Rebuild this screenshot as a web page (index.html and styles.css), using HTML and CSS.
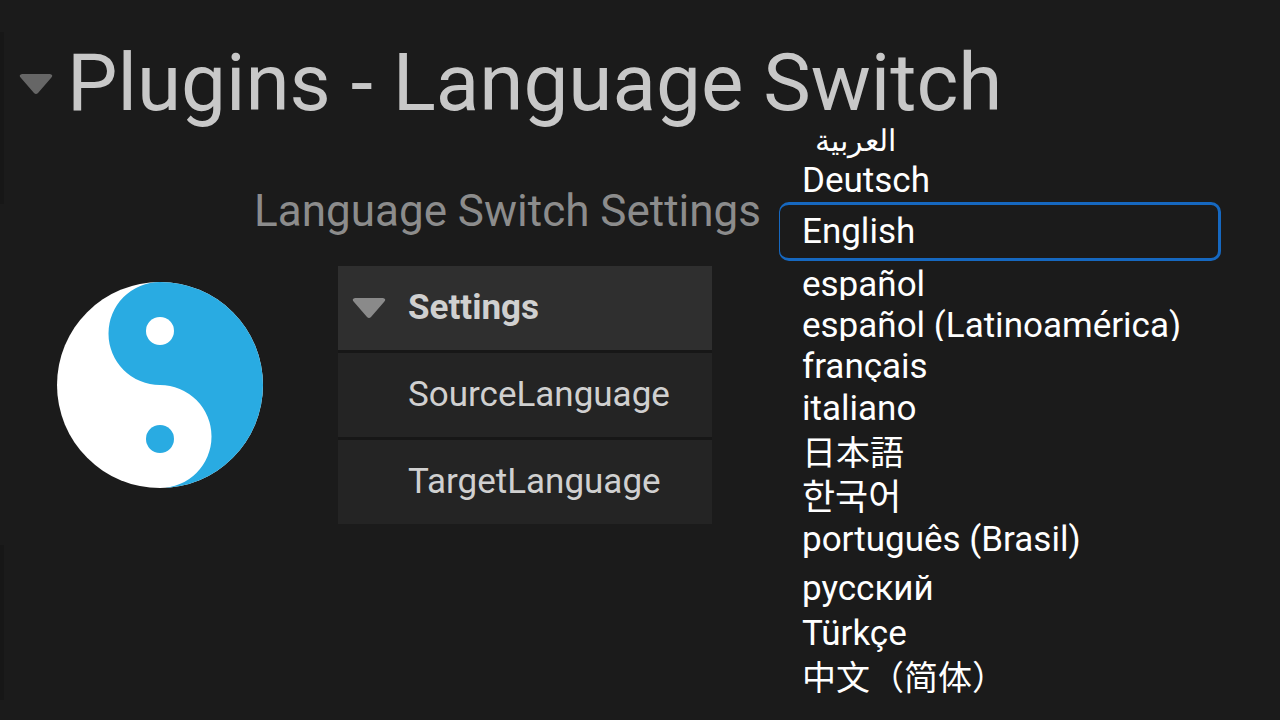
FILE: index.html
```html
<!DOCTYPE html>
<html lang="en">

<head>
  <meta charset="UTF-8">
  <meta name="viewport" content="width=device-width, initial-scale=1">
  <title>Plugins - Language Switch</title>
  <link rel="stylesheet" href="styles.css">
</head>

<body>

  <header class="page-header">
    <button class="toggle" type="button" aria-label="Collapse">
      <svg class="arrow" width="34" height="22" viewBox="0 0 34 22">
        <path d="M3 1h28q4 1 1 4L19 20q-2 2-4 0L2 5q-3-3 1-4z" />
      </svg>
    </button>
    <h1>Plugins - Language Switch</h1>
  </header>

  <main class="content">

    <section class="plugin">
      <h2>Language Switch Settings</h2>

      <div class="plugin-body">
        <svg class="logo" width="206" height="206" viewBox="0 0 206 206" role="img" aria-label="Language Switch">
          <circle cx="103" cy="103" r="103" fill="#fff" />
          <path fill="#29abe2" d="M103 0A103 103 0 0 1 103 206A51.500 51.500 0 0 0 103 103A51.500 51.500 0 0 1 103 0z" />
          <circle cx="103" cy="49" r="14" fill="#fff" />
          <circle cx="103" cy="157" r="14" fill="#29abe2" />
        </svg>

        <div class="settings">
          <button class="settings-head" type="button">
            <svg class="arrow" width="34" height="22" viewBox="0 0 34 22">
              <path d="M3 1h28q4 1 1 4L19 20q-2 2-4 0L2 5q-3-3 1-4z" />
            </svg>
            Settings
          </button>
          <div class="settings-row">SourceLanguage</div>
          <div class="settings-row">TargetLanguage</div>
        </div>
      </div>
    </section>

    <ul class="languages">
      <li><button type="button" class="arabic" lang="ar">العربية</button></li>
      <li><button type="button" class="short" lang="de">Deutsch</button></li>
      <li><button type="button" class="selected" lang="en">English</button></li>
      <li><button type="button" class="cut" lang="es">español</button></li>
      <li><button type="button" class="cut" lang="es-419">español (Latinoamérica)</button></li>
      <li><button type="button" class="cut" lang="fr">français</button></li>
      <li class="spaced"><button type="button" lang="it">italiano</button></li>
      <li><button type="button" lang="ja">日本語</button></li>
      <li><button type="button" lang="ko">한국어</button></li>
      <li><button type="button" class="raised" lang="pt-BR">português (Brasil)</button></li>
      <li><button type="button" lang="ru">русский</button></li>
      <li><button type="button" lang="tr">Türkçe</button></li>
      <li><button type="button" lang="zh-Hant">中文（简体）</button></li>
    </ul>

  </main>

</body>

</html>
```

FILE: styles.css
```css
* {
  box-sizing: border-box;
}

body {
  margin: 0;
  min-height: 100vh;
  color: #d0d0d0;
  /* faint shadow strips on the left edge */
  background:
    linear-gradient(#171717, #171717) 0 32px / 4px 172px no-repeat,
    linear-gradient(#171717, #171717) 0 545px / 4px 155px no-repeat,
    #1b1b1b;
  font-family: Roboto, "Noto Sans CJK TC", sans-serif;
  font-size: 35px;
}

button {
  margin: 0;
  padding: 0;
  border: 0;
  background: none;
  color: inherit;
  font: inherit;
  text-align: left;
  cursor: pointer;
}

h1,
h2 {
  margin: 0;
  font-weight: 400;
}

.page-header {
  display: flex;
  align-items: center;
  gap: 14px;
  height: 118px;
  padding: 48px 0 0 19px;
}

.page-header h1 {
  color: #c8c8c8;
  font-size: 80px;
  line-height: 70px;
  white-space: nowrap;
}

.toggle {
  display: flex;
  padding-top: 2px;
  color: #666;
}

.arrow {
  flex: none;
  fill: currentColor;
}

.content {
  display: flex;
  align-items: flex-start;
}

/* left side */
.plugin {
  flex: 1;
  padding-top: 68px;
}

.plugin h2 {
  padding-right: 18px;
  color: #8c8c8c;
  font-size: 44px;
  line-height: 50px;
  text-align: right;
  white-space: nowrap;
}

.plugin-body {
  display: flex;
  align-items: flex-start;
  justify-content: flex-end;
  gap: 75px;
  padding: 30px 67px 0 0;
}

.logo {
  flex: none;
  margin-top: 16px;
}

.settings {
  display: grid;
  gap: 3px;
  width: 374px;
  background: #171717;
}

.settings-head,
.settings-row {
  height: 84px;
  line-height: 84px;
}

.settings-head {
  display: flex;
  align-items: center;
  gap: 22px;
  padding-left: 14px;
  background: #2f2f2f;
  font-weight: 700;
}

.settings-head .arrow {
  color: #8a8a8a;
}

.settings-row {
  padding-left: 70px;
  background: #242424;
}

/* language list */
.languages {
  width: 501px;
  margin: 0;
  padding: 0 59px 0 0;
  list-style: none;
  color: #fff;
}

.languages button {
  display: block;
  width: 100%;
  padding-left: 23px;
  line-height: 45px;
  white-space: nowrap;
}

.languages .arabic {
  height: 42px;
  padding-left: 36px;
  font-size: 30px;
}

.languages .short {
  line-height: 42px;
}

.languages .selected {
  padding-left: 22px;
  border: 3px solid #1668c0;
  border-left-width: 1px;
  border-radius: 10px;
  line-height: 53px;
}

/* these rows hide the bottom of the descenders */
.languages .cut {
  height: 39px;
  margin-bottom: 2px;
  line-height: 48px;
  overflow: hidden;
}

.languages .spaced {
  padding-top: 2px;
}

.languages .raised {
  margin: -4px 0 4px;
}

.languages :lang(ja) {
  font-family: Roboto, "Noto Sans CJK JP", sans-serif;
  font-size: 34px;
}

.languages :lang(ko) {
  font-family: Roboto, "Noto Sans CJK KR", sans-serif;
  font-size: 36px;
}

.languages :lang(zh) {
  font-size: 34px;
}
```
